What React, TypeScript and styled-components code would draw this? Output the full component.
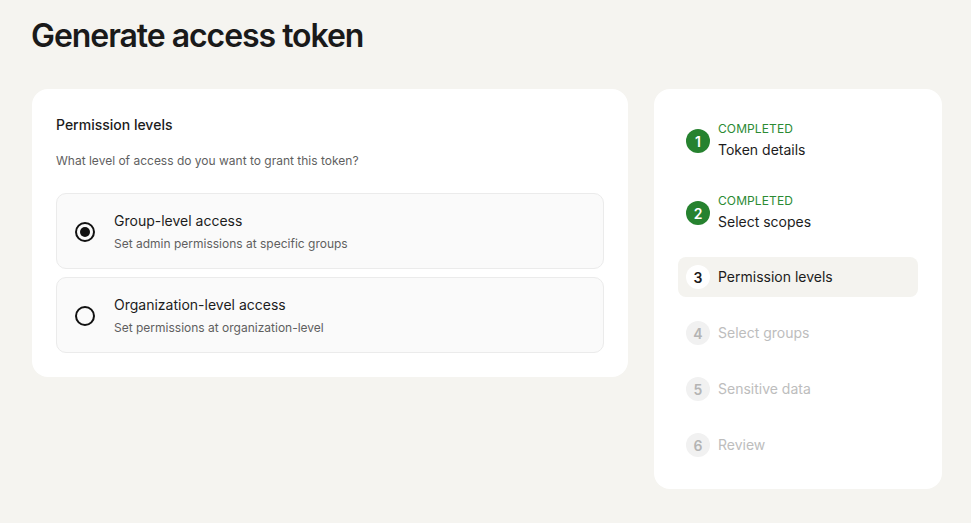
import React from 'react'
import styled, { createGlobalStyle } from 'styled-components'

const GlobalStyle = createGlobalStyle`
  html, body {
    margin: 0;
    background: #f5f4f0;
    font-family: Inter, "Noto Sans", sans-serif;
    color: #1c1c1c;
    -webkit-font-smoothing: antialiased;
  }
`

type TStepState = 'completed' | 'current' | 'pending'

type TStep = {
  label: string
  state: TStepState
}

const steps: TStep[] = [
  { label: 'Token details', state: 'completed' },
  { label: 'Select scopes', state: 'completed' },
  { label: 'Permission levels', state: 'current' },
  { label: 'Select groups', state: 'pending' },
  { label: 'Sensitive data', state: 'pending' },
  { label: 'Review', state: 'pending' },
]

const options = [
  {
    title: 'Group-level access',
    description: 'Set admin permissions at specific groups',
  },
  {
    title: 'Organization-level access',
    description: 'Set permissions at organization-level',
  },
]

export default function App() {
  const [selected, setSelected] = React.useState(0)

  return (
    <React.Fragment>
      <GlobalStyle />
      <Page>
        <Title>Generate access token</Title>
        <Columns>
          <Card>
            <CardTitle>Permission levels</CardTitle>
            <CardHint>What level of access do you want to grant this token?</CardHint>
            <OptionList>
              {options.map((option, i) => (
                <Option key={option.title} onClick={() => setSelected(i)}>
                  <Radio $checked={selected === i} />
                  <OptionText>
                    <OptionTitle>{option.title}</OptionTitle>
                    <OptionDescription>{option.description}</OptionDescription>
                  </OptionText>
                </Option>
              ))}
            </OptionList>
          </Card>

          <StepsCard>
            {steps.map((step, i) => (
              <StepRow key={step.label} $state={step.state}>
                <StepNumber $state={step.state}>{i + 1}</StepNumber>
                <StepText>
                  {step.state === 'completed' && <StepStatus>COMPLETED</StepStatus>}
                  <StepLabel $state={step.state}>{step.label}</StepLabel>
                </StepText>
              </StepRow>
            ))}
          </StepsCard>
        </Columns>
      </Page>
    </React.Fragment>
  )
}

const Page = styled.div`
  padding: 16px 29px 32px 32px;
`

const Title = styled.h1`
  margin: 0 0 33px -1px;
  font-size: 32px;
  line-height: 40px;
  font-weight: 600;
  letter-spacing: -1.05px;
  color: #1a1a1a;
`

const Columns = styled.div`
  display: flex;
  align-items: flex-start;
  gap: 26px;
`

const Card = styled.section`
  width: 596px;
  box-sizing: border-box;
  padding: 24px;
  background: #ffffff;
  border-radius: 16px;
`

const CardTitle = styled.h2`
  margin: 0;
  font-size: 14px;
  line-height: 24px;
  font-weight: 500;
  color: #1c1c1c;
`

const CardHint = styled.p`
  margin: 15px 0 0;
  font-size: 12px;
  line-height: 18px;
  color: #5f5f5f;
`

const OptionList = styled.div`
  display: flex;
  flex-direction: column;
  gap: 8px;
  margin-top: 23px;
`

const Option = styled.label`
  display: flex;
  align-items: center;
  gap: 19px;
  padding: 17px 18px 15px;
  background: #fafafa;
  border: 1px solid #ebebeb;
  border-radius: 10px;
  cursor: pointer;
`

const Radio = styled.span<{ $checked: boolean }>`
  flex: none;
  position: relative;
  width: 20px;
  height: 20px;
  box-sizing: border-box;
  border: 2px solid #111111;
  border-radius: 50%;

  &::after {
    content: '';
    display: ${(p) => (p.$checked ? 'block' : 'none')};
    position: absolute;
    inset: 3px;
    border-radius: 50%;
    background: #111111;
  }
`

const OptionText = styled.div`
  display: flex;
  flex-direction: column;
  gap: 4px;
`

const OptionTitle = styled.div`
  font-size: 14px;
  line-height: 20px;
  color: #1c1c1c;
`

const OptionDescription = styled.div`
  font-size: 12px;
  line-height: 18px;
  color: #5f5f5f;
`

const StepsCard = styled.nav`
  width: 288px;
  box-sizing: border-box;
  padding: 24px;
  background: #ffffff;
  border-radius: 16px;
  display: flex;
  flex-direction: column;
  gap: 16px;
`

const StepRow = styled.div<{ $state: TStepState }>`
  display: flex;
  align-items: center;
  gap: 8px;
  padding: 8px;
  border-radius: 8px;
  background: ${(p) => (p.$state === 'current' ? '#f4f3ef' : 'transparent')};
`

const numberColours: Record<TStepState, { bg: string; fg: string }> = {
  completed: { bg: '#26822f', fg: '#ffffff' },
  current: { bg: '#ffffff', fg: '#1c1c1c' },
  pending: { bg: '#f1f1f1', fg: '#b4b4b4' },
}

const StepNumber = styled.span<{ $state: TStepState }>`
  flex: none;
  width: 24px;
  height: 24px;
  border-radius: 50%;
  display: flex;
  align-items: center;
  justify-content: center;
  font-size: 14px;
  font-weight: 600;
  background: ${(p) => numberColours[p.$state].bg};
  color: ${(p) => numberColours[p.$state].fg};
`

const StepText = styled.div`
  display: flex;
  flex-direction: column;
  gap: 2px;
`

const StepStatus = styled.span`
  font-size: 12px;
  line-height: 16px;
  color: #2b8a34;
  letter-spacing: 0.1px;
`

const StepLabel = styled.span<{ $state: TStepState }>`
  font-size: 14px;
  line-height: 22px;
  color: ${(p) => (p.$state === 'pending' ? '#bdbdbd' : '#1c1c1c')};
`
